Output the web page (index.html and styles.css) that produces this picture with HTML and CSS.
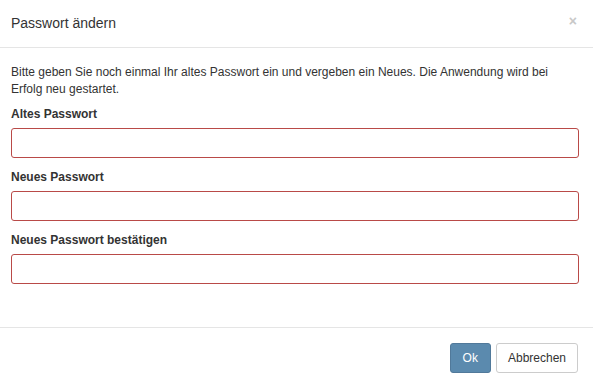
FILE: index.html
```html
<!DOCTYPE html>
<html lang="de">
<head>
<meta charset="utf-8">
<title>Passwort ändern</title>
<link rel="stylesheet" href="styles.css">
</head>
<body>
<div class="modal">
  <div class="modal-header">
    <h4 class="modal-title">Passwort ändern</h4>
    <button class="close" type="button" aria-label="Close">×</button>
  </div>
  <div class="modal-body">
    <p class="intro">Bitte geben Sie noch einmal Ihr altes Passwort ein und vergeben ein Neues. Die Anwendung wird bei Erfolg neu gestartet.</p>
    <form class="form">
      <div class="form-group">
        <label class="label" for="old">Altes Passwort</label>
        <input class="input" id="old" type="password">
      </div>
      <div class="form-group">
        <label class="label" for="new">Neues Passwort</label>
        <input class="input" id="new" type="password">
      </div>
      <div class="form-group">
        <label class="label" for="confirm">Neues Passwort bestätigen</label>
        <input class="input" id="confirm" type="password">
      </div>
    </form>
  </div>
  <div class="modal-footer">
    <button class="btn btn-primary" type="button">Ok</button>
    <button class="btn btn-default" type="button">Abbrechen</button>
  </div>
</div>
</body>
</html>
```

FILE: styles.css
```css
* { box-sizing: border-box; }
html, body {
  margin: 0;
  padding: 0;
  background: #fff;
}
body {
  font-family: "Liberation Sans", Arial, sans-serif;
  font-size: 12px;
  line-height: 17px;
  color: #333;
}
.modal {
  width: 593px;
  height: 387px;
  display: flex;
  flex-direction: column;
  background: #fff;
}
.modal-header {
  display: flex;
  justify-content: space-between;
  align-items: flex-start;
  padding: 13px 16px 14px 11px;
  border-bottom: 1px solid #e5e5e5;
}
.modal-title {
  margin: 0;
  font-size: 14px;
  line-height: 20px;
  font-weight: normal;
  color: #333;
}
.close {
  border: 0;
  background: transparent;
  padding: 0;
  margin-top: -2px;
  font-family: "Liberation Sans", Arial, sans-serif;
  font-size: 14px;
  line-height: 20px;
  font-weight: bold;
  color: #c8c8c8;
  cursor: pointer;
}
.modal-body {
  padding: 16px 14px 43px 11px;
}
.intro {
  margin: 0 0 8px;
}
.form {
  display: flex;
  flex-direction: column;
  gap: 11px;
  margin: 0;
}
.form-group {
  display: flex;
  flex-direction: column;
}
.label {
  font-weight: bold;
  margin-bottom: 5px;
  line-height: 17px;
}
.input {
  width: 100%;
  height: 30px;
  border: 1px solid #b94a48;
  border-radius: 3px;
  background: #fff;
  padding: 5px 10px;
  font-family: inherit;
  font-size: 12px;
}
.modal-footer {
  display: flex;
  justify-content: flex-end;
  gap: 5px;
  padding: 15px 15px 14px;
  border-top: 1px solid #e5e5e5;
}
.btn {
  height: 30px;
  padding: 0 12px;
  border-radius: 3px;
  font-family: inherit;
  font-size: 12px;
  line-height: 28px;
  cursor: pointer;
}
.btn-primary {
  background: #5b8aae;
  border: 1px solid #51799a;
  color: #fff;
}
.btn-default {
  background: #fff;
  border: 1px solid #ccc;
  color: #333;
  padding: 0 11px;
}
```
